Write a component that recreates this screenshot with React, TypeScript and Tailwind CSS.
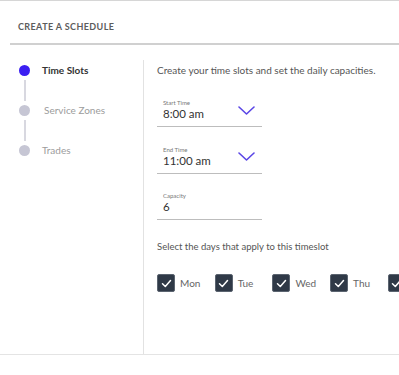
import React from "react";

const steps = [
  { label: "Time Slots", active: true, indent: "ml-[12px]" },
  { label: "Service Zones", active: false, indent: "ml-[14px]" },
  { label: "Trades", active: false, indent: "ml-[12px]" },
];

const days = ["Mon", "Tue", "Wed", "Thu", "Fri"];

const Chevron: React.FC = () => (
  <svg width="17" height="9" viewBox="0 0 17 9" fill="none">
    <path d="M1 1l7.5 7L16 1" stroke="#5a46e6" strokeWidth="1.6" strokeLinecap="round" strokeLinejoin="round" />
  </svg>
);

interface FieldProps {
  label: string;
  value: string;
  select?: boolean;
}

const Field: React.FC<FieldProps> = ({ label, value, select }) => (
  <div className="w-[105px] flex items-center border-b-[1.5px] border-[#bdbdbd] pl-[6px] pr-[7px] pb-[5px]">
    <div className="flex flex-col flex-1">
      <span className="text-[6px] leading-[8px] text-[#777]">{label}</span>
      <span className="text-[11.5px] leading-[14px] text-[#333]">{value}</span>
    </div>
    {select && <Chevron />}
  </div>
);

const DayCheck: React.FC<{ day: string }> = ({ day }) => (
  <div className="w-[57.7px] shrink-0 flex items-center">
    <div className="w-[18px] h-[18px] shrink-0 rounded-[2px] bg-[#2f3947] border border-[#5b6470] flex items-center justify-center">
      <svg width="11" height="9" viewBox="0 0 11 9" fill="none">
        <path d="M1.5 4.8l2.8 2.7L9.5 1.5" stroke="#fff" strokeWidth="1.5" strokeLinecap="round" strokeLinejoin="round" />
      </svg>
    </div>
    <span className="ml-[5px] text-[10px] text-[#666]">{day}</span>
  </div>
);

export default function App() {
  return (
    <div className="w-[399px] h-[375px] overflow-hidden bg-white border-t border-[#d6d6d6] font-['Lato',sans-serif]">
      <div className="h-[42px] pt-[21px] pl-[18px]">
        <h1 className="text-[9px] leading-[10px] font-bold tracking-[0.4px] text-[#5c5c5c]">CREATE A SCHEDULE</h1>
      </div>
      <div className="ml-[10px] h-[2px] bg-[#d0d0d0]" />

      <div className="mt-[15px] h-[295px] flex border-b-[1.5px] border-[#e4e4e4]">
        <div className="w-[144px] shrink-0 border-r-[1.5px] border-[#e2e2e2] pt-[5px] pl-[19px]">
          {steps.map((step, i) => (
            <div key={step.label}>
              {i > 0 && <div className="w-[2px] h-[21px] ml-[4.5px] my-[4px] bg-[#d8d8e0]" />}
              <div className="flex items-center h-[11px]">
                <div
                  className={
                    step.active
                      ? "w-[11px] h-[11px] rounded-full bg-[#3b1ff2]"
                      : "w-[11px] h-[11px] rounded-full bg-[#c6c6d4]"
                  }
                />
                <span
                  className={
                    step.active
                      ? `${step.indent} text-[10px] font-bold text-[#333]`
                      : `${step.indent} text-[10px] text-[#9c9c9c]`
                  }
                >
                  {step.label}
                </span>
              </div>
            </div>
          ))}
        </div>

        <div className="flex-1 pl-[13px] pt-[5px]">
          <p className="text-[10px] leading-[11px] text-[#555]">Create your time slots and set the daily capacities.</p>
          <div className="mt-[23px] flex flex-col gap-[18.5px]">
            <Field label="Start Time" value="8:00 am" select />
            <Field label="End Time" value="11:00 am" select />
            <Field label="Capacity" value="6" />
          </div>
          <p className="mt-[21px] text-[9.5px] leading-[11px] text-[#555]">Select the days that apply to this timeslot</p>
          <div className="mt-[22px] flex">
            {days.map((d) => (
              <DayCheck key={d} day={d} />
            ))}
          </div>
        </div>
      </div>
    </div>
  );
}
